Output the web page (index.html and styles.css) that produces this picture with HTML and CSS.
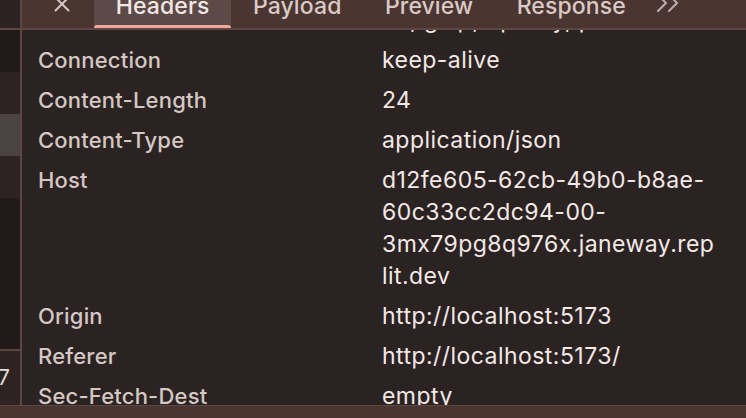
FILE: index.html
```html
<!DOCTYPE html>
<html lang="en">
<head>
<meta charset="utf-8">
<title>Headers</title>
<link rel="stylesheet" href="styles.css">
</head>
<body>
<div class="app">
  <div class="corner"></div>
  <div class="tabbar">
    <span class="close" aria-label="Close">
      <svg width="16" height="16" viewBox="0 0 16 16"><path d="M1.5 1.5 L14.5 14.5 M14.5 1.5 L1.5 14.5" stroke="#d6c8c5" stroke-width="2" stroke-linecap="round" fill="none"/></svg>
    </span>
    <span class="tab active">Headers</span>
    <span class="tab">Payload</span>
    <span class="tab">Preview</span>
    <span class="tab">Response</span>
    <span class="more" aria-label="More tabs">
      <svg width="26" height="20" viewBox="0 0 26 20"><path d="M3 2 L11 10 L3 18 M14 2 L22 10 L14 18" stroke="#bcadaa" stroke-width="2" stroke-linecap="round" stroke-linejoin="round" fill="none"/></svg>
    </span>
  </div>
  <div class="sidelist">
    <div class="srow dark"></div>
    <div class="srow"></div>
    <div class="srow selected"></div>
    <div class="srow"></div>
    <div class="srow dark tall"></div>
    <div class="srow last"><span class="clip">517</span></div>
  </div>
  <div class="content">
    <div class="rows">
      <div class="row"><span class="name">Cache-Control</span><span class="value">en, gzip, up_key, p</span></div>
      <div class="row"><span class="name">Connection</span><span class="value">keep-alive</span></div>
      <div class="row"><span class="name">Content-Length</span><span class="value">24</span></div>
      <div class="row"><span class="name">Content-Type</span><span class="value">application/json</span></div>
      <div class="row"><span class="name">Host</span><span class="value">d12fe605-62cb-49b0-b8ae-60c33cc2dc94-00-3mx79pg8q976x.janeway.replit.dev</span></div>
      <div class="row"><span class="name">Origin</span><span class="value">http://localhost:5173</span></div>
      <div class="row"><span class="name">Referer</span><span class="value">http://localhost:5173/</span></div>
      <div class="row"><span class="name">Sec-Fetch-Dest</span><span class="value">empty</span></div>
    </div>
  </div>
  <div class="statusbar"></div>
</div>
</body>
</html>
```

FILE: styles.css
```css
* { box-sizing: border-box; }
html, body { margin: 0; padding: 0; }
body {
  width: 746px;
  height: 418px;
  overflow: hidden;
  background: #2b2322;
  font-family: Inter, "Noto Sans", sans-serif;
}
.app {
  display: grid;
  grid-template-columns: 20px 1fr;
  grid-template-rows: 30px 1fr 13px;
  column-gap: 2px;
  height: 418px;
  background: #5e4643;
}
.corner {
  background: #2b2221;
  border-bottom: 2px solid #5e4643;
}
.tabbar {
  display: flex;
  align-items: flex-start;
  background: #4b3531;
  border-bottom: 2px solid #5e4643;
  overflow: hidden;
}
.close {
  display: flex;
  margin: -4px 24px 0 32px;
}
.tab {
  position: relative;
  display: block;
  height: 28px;
  padding: 0 21.75px;
  font-size: 23px;
  font-weight: 500;
  line-height: 12px;
  letter-spacing: 0.1px;
  color: #d9cac7;
  white-space: nowrap;
}
.tab.active {
  background: #5c4a48;
  color: #f3e7e5;
}
.tab.active::after {
  content: "";
  position: absolute;
  left: 0;
  right: 0;
  bottom: -1px;
  height: 4px;
  border-radius: 3px 3px 0 0;
  background: #f2a69c;
}
.more {
  display: flex;
  margin: -7px 0 0 7px;
}
.sidelist {
  display: flex;
  flex-direction: column;
  background: #2c2322;
  overflow: hidden;
}
.srow {
  height: 42px;
  flex: none;
  background: #2c2322;
}
.srow.dark { background: #211a19; }
.srow.selected { background: #4b4341; }
.srow.tall { height: 153px; border-bottom: 2px solid #5e4643; }
.srow.last {
  flex: 1;
  display: flex;
  justify-content: flex-end;
  padding-right: 10px;
  padding-top: 14px;
  font-size: 21px;
  line-height: 26px;
  color: #e6dcda;
  white-space: nowrap;
}
.content {
  background: #2b2322;
  overflow: hidden;
}
.rows {
  margin-top: -30px;
  padding: 0 16px;
}
.row {
  display: grid;
  grid-template-columns: 344px 1fr;
  padding: 4px 0;
  line-height: 32px;
}
.name {
  font-size: 22px;
  font-weight: 500;
  letter-spacing: 0.2px;
  color: #d4c7c4;
}
.value {
  font-size: 23px;
  letter-spacing: 0.45px;
  color: #f3e9e7;
  overflow-wrap: anywhere;
  padding-right: 12px;
}
.statusbar {
  grid-column: 1 / -1;
  background: #4b3531;
  border-top: 1px solid #5e4643;
}
```
